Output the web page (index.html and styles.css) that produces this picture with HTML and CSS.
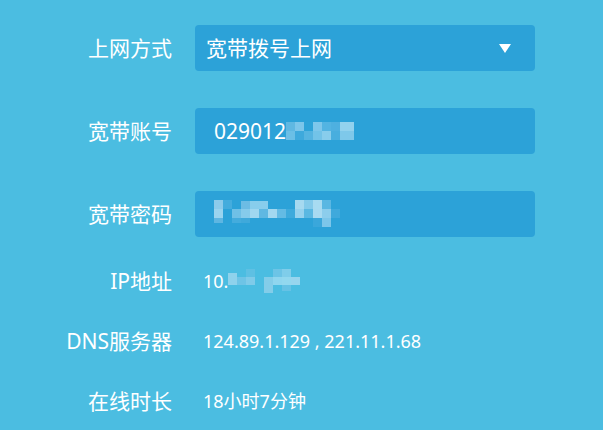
FILE: index.html
```html
<!DOCTYPE html>
<html lang="zh-CN">
<head>
  <meta charset="UTF-8">
  <title>上网设置</title>
  <link rel="stylesheet" href="styles.css">
</head>
<body>

<div class="panel">
  <div class="row">
    <label class="label">上网方式</label>
    <div class="box select">
      <span class="box-text">宽带拨号上网</span>
      <span class="arrow"></span>
    </div>
  </div>

  <div class="row">
    <label class="label">宽带账号</label>
    <div class="box input">
      <span class="box-text">029012</span>
      <svg class="mosaic" width="68" height="18" viewBox="0 0 68 18">
        <rect x="0" y="0" width="9" height="9" fill="#5fb8e2"/>
        <rect x="9" y="0" width="9" height="9" fill="#7cc6ea"/>
        <rect x="18" y="0" width="9" height="9" fill="#2ea3d8"/>
        <rect x="27" y="0" width="9" height="9" fill="#7ec7eb"/>
        <rect x="36" y="0" width="9" height="9" fill="#53b4e2"/>
        <rect x="45" y="0" width="9" height="9" fill="#4eb0e0"/>
        <rect x="54" y="0" width="14" height="9" fill="#92d2ee"/>
        <rect x="0" y="9" width="9" height="9" fill="#6bbfe6"/>
        <rect x="9" y="9" width="9" height="9" fill="#3ea9dc"/>
        <rect x="18" y="9" width="9" height="9" fill="#55b4e1"/>
        <rect x="27" y="9" width="9" height="9" fill="#72c3e8"/>
        <rect x="36" y="9" width="9" height="9" fill="#88cdec"/>
        <rect x="45" y="9" width="9" height="9" fill="#48aede"/>
        <rect x="54" y="9" width="14" height="9" fill="#7ec8ea"/>
      </svg>
    </div>
  </div>

  <div class="row last">
    <label class="label">宽带密码</label>
    <div class="box input">
      <svg class="mosaic" width="130" height="28" viewBox="0 0 130 28">
        <rect x="0" y="0" width="9" height="9" fill="#8ccbeb"/>
        <rect x="9" y="0" width="9" height="9" fill="#44acdd"/>
        <rect x="27" y="1" width="9" height="8" fill="#6cbce4"/>
        <rect x="36" y="1" width="18" height="8" fill="#88cdec"/>
        <rect x="81" y="0" width="9" height="9" fill="#a6d9f0"/>
        <rect x="90" y="0" width="9" height="9" fill="#84caea"/>
        <rect x="99" y="0" width="9" height="9" fill="#a8dbf1"/>
        <rect x="108" y="0" width="9" height="9" fill="#5ab7e2"/>
        <rect x="0" y="9" width="9" height="9" fill="#9ad4ef"/>
        <rect x="18" y="9" width="9" height="9" fill="#6fc0e6"/>
        <rect x="27" y="9" width="9" height="9" fill="#86cbeb"/>
        <rect x="36" y="9" width="9" height="9" fill="#a0d7f0"/>
        <rect x="45" y="9" width="9" height="9" fill="#5fb8e2"/>
        <rect x="54" y="9" width="9" height="9" fill="#a3d8f0"/>
        <rect x="63" y="9" width="9" height="9" fill="#64bbe4"/>
        <rect x="72" y="9" width="9" height="9" fill="#3eaadc"/>
        <rect x="81" y="9" width="9" height="9" fill="#96d2ee"/>
        <rect x="90" y="9" width="9" height="9" fill="#5ab8e2"/>
        <rect x="99" y="9" width="9" height="9" fill="#a8daf1"/>
        <rect x="108" y="9" width="9" height="9" fill="#8ccdec"/>
        <rect x="117" y="9" width="9" height="9" fill="#3fa9dc"/>
        <rect x="0" y="18" width="9" height="5" fill="#5eb6e2"/>
        <rect x="18" y="18" width="9" height="5" fill="#44acdd"/>
        <rect x="27" y="18" width="9" height="5" fill="#3fa9db"/>
        <rect x="99" y="18" width="9" height="9" fill="#3aa7db"/>
        <rect x="108" y="18" width="9" height="9" fill="#7cc6ea"/>
      </svg>
    </div>
  </div>

  <div class="info-row">
    <span class="label">IP地址</span>
    <span class="value">10.<svg class="mosaic" width="72" height="24" viewBox="0 0 72 24">
        <rect x="0" y="4" width="9" height="12" fill="#8ed2ec"/>
        <rect x="9" y="8" width="9" height="8" fill="#6ec4e6"/>
        <rect x="18" y="0" width="9" height="8" fill="#5ec0e3"/>
        <rect x="18" y="8" width="9" height="8" fill="#7fcbe9"/>
        <rect x="36" y="8" width="9" height="16" fill="#83cde9"/>
        <rect x="45" y="0" width="9" height="8" fill="#6cc4e6"/>
        <rect x="45" y="8" width="9" height="8" fill="#8fd6ef"/>
        <rect x="54" y="0" width="9" height="8" fill="#7fcdea"/>
        <rect x="54" y="8" width="9" height="8" fill="#92d8ef"/>
        <rect x="63" y="8" width="9" height="8" fill="#97d5ee"/>
        <rect x="54" y="16" width="9" height="6" fill="#66c2e5"/>
      </svg></span>
  </div>

  <div class="info-row">
    <span class="label">DNS服务器</span>
    <span class="value">124.89.1.129 , 221.11.1.68</span>
  </div>

  <div class="info-row">
    <span class="label">在线时长</span>
    <span class="value">18小时7分钟</span>
  </div>
</div>

</body>
</html>
```

FILE: styles.css
```css
body {
  margin: 0;
  background-color: #4bbde1;
  color: #fff;
  font-family: "Noto Sans", "Noto Sans CJK SC", sans-serif;
}
.panel {
  padding-top: 25px;
}
.row {
  display: flex;
  align-items: center;
  gap: 23px;
  margin-bottom: 37px;
}
.row.last {
  margin-bottom: 14px;
}
.label {
  width: 172px;
  text-align: right;
  font-size: 21px;
  line-height: 26px;
  flex-shrink: 0;
}
.box {
  width: 340px;
  height: 46px;
  box-sizing: border-box;
  background-color: #2ca2d8;
  border-radius: 4px;
  display: flex;
  align-items: center;
  font-size: 21px;
}
.select {
  padding: 0 24px 0 11px;
  justify-content: space-between;
}
.input {
  padding-left: 19px;
}
.box-text {
  line-height: 26px;
}
.arrow {
  width: 0;
  height: 0;
  border-left: 6.5px solid transparent;
  border-right: 6.5px solid transparent;
  border-top: 9px solid #fff;
}
.mosaic {
  display: block;
}
.info-row {
  display: flex;
  align-items: center;
  gap: 31px;
  height: 60px;
}
.value {
  display: flex;
  align-items: center;
  font-size: 18px;
  line-height: 24px;
}
```
